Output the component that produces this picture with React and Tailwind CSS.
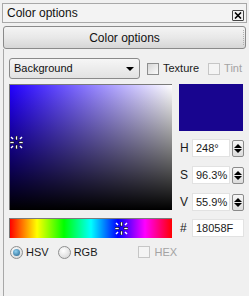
import React from 'react';

function Marker({ className }) {
  // small "busy" style crosshair used on the picker surfaces
  const parts = [
    { x: 5.5, y: 0, w: 2, h: 4 },
    { x: 5.5, y: 9, w: 2, h: 4 },
    { x: 0, y: 5.5, w: 4, h: 2 },
    { x: 9, y: 5.5, w: 4, h: 2 },
  ];
  return (
    <svg width="13" height="13" viewBox="0 0 13 13" className={className}>
      {parts.map((p, i) => (
        <rect key={i} x={p.x} y={p.y} width={p.w} height={p.h} fill="#fff" stroke="#000" strokeWidth="0.6" />
      ))}
      <line x1="1" y1="1" x2="3" y2="3" stroke="#fff" strokeWidth="1.4" />
      <line x1="12" y1="1" x2="10" y2="3" stroke="#fff" strokeWidth="1.4" />
      <line x1="1" y1="12" x2="3" y2="10" stroke="#fff" strokeWidth="1.4" />
      <line x1="12" y1="12" x2="10" y2="10" stroke="#fff" strokeWidth="1.4" />
    </svg>
  );
}

function Spinner() {
  return (
    <div className="w-[12px] h-[17px] rounded-[2px] border border-[#8a8a8a] bg-[linear-gradient(to_bottom,#f6f6f6,#dcdcdc)] flex flex-col items-center justify-center gap-[1px]">
      <div className="w-0 h-0 border-l-[4px] border-r-[4px] border-b-[4px] border-l-transparent border-r-transparent border-b-black" />
      <div className="w-0 h-0 border-l-[4px] border-r-[4px] border-t-[4px] border-l-transparent border-r-transparent border-t-black" />
    </div>
  );
}

function Checkbox({ label, disabled }) {
  return (
    <div className="flex items-center gap-[4px]">
      <div
        className={
          disabled
            ? 'w-[12px] h-[12px] border border-[#c6c6c6] bg-[#f4f4f4]'
            : 'w-[12px] h-[12px] border border-[#8e8f8f] bg-[linear-gradient(135deg,#d6d6d6,#fbfbfb)]'
        }
      />
      <span className={disabled ? 'text-[#a3a3a3]' : 'text-[#1a1a1a]'}>{label}</span>
    </div>
  );
}

function Radio({ label, checked }) {
  return (
    <div className="flex items-center gap-[3px]">
      <div className="w-[13px] h-[13px] rounded-full border border-[#8e8f8f] bg-[radial-gradient(circle_at_40%_35%,#ffffff,#d0d0d0)] flex items-center justify-center">
        {checked && <div className="w-[7px] h-[7px] rounded-full bg-[radial-gradient(circle_at_40%_35%,#8fd0f0,#1f5f8a)]" />}
      </div>
      <span className="text-[#1a1a1a]">{label}</span>
    </div>
  );
}

function Field({ label, value, spin }) {
  return (
    <div className="flex items-center h-[18px]">
      <span className="w-[12px] text-[#1a1a1a] text-[12px] leading-none">{label}</span>
      <div className={`${spin ? 'w-[38px]' : 'w-[52px]'} h-[18px] bg-white border border-[#e2e2e2] flex items-center pl-[3px] text-[#1a1a1a]`}>
        {value}
      </div>
      {spin && (
        <div className="ml-[2px]">
          <Spinner />
        </div>
      )}
    </div>
  );
}

export default function App() {
  return (
    <div className="w-[249px] h-[296px] bg-[#f0f0f0] overflow-hidden flex flex-col text-[11px] font-['Liberation_Sans',Arial,sans-serif]">
      {/* Title bar */}
      <div className="mx-[2px] mt-[3px] h-[20px] border border-[#a8a8a8] bg-[#f3f3f3] flex items-center justify-between pl-[4px] pr-[2px]">
        <span className="text-[#111] text-[12px]">Color options</span>
        <div className="w-[12px] h-[11px] mt-[5px] border border-[#444] rounded-[1px] flex items-center justify-center">
          <svg width="8" height="7" viewBox="0 0 8 7">
            <path d="M1 0.5 L7 6.5 M7 0.5 L1 6.5" stroke="#000" strokeWidth="1.6" />
          </svg>
        </div>
      </div>

      {/* Header button */}
      <div className="mx-[3px] mt-[3px] h-[23px] rounded-[3px] border border-[#8a8a8a] bg-[linear-gradient(to_bottom,#f4f4f4,#e8e8e8_50%,#d6d6d6)] flex items-center justify-center relative">
        <span className="text-[#111] text-[12px]">Color options</span>
        <div className="absolute right-[1px] top-[3px] bottom-[3px] border-r border-dotted border-[#b0b0b0]" />
      </div>

      {/* Panel */}
      <div className="ml-[3px] flex-1 border-l border-[#a8a8a8] pl-[5px] pt-[9px]">
        <div className="flex items-center">
          <div className="w-[131px] h-[21px] rounded-[3px] border border-[#8a8a8a] bg-[linear-gradient(to_bottom,#f6f6f6,#e2e2e2)] flex items-center justify-between pl-[4px] pr-[5px]">
            <span className="text-[#111]">Background</span>
            <div className="w-0 h-0 border-l-[4px] border-r-[4px] border-t-[4px] border-l-transparent border-r-transparent border-t-black" />
          </div>
          <div className="ml-[7px]">
            <Checkbox label="Texture" />
          </div>
          <div className="ml-[9px]">
            <Checkbox label="Tint" disabled />
          </div>
        </div>

        <div className="flex mt-[5px]">
          <div className="flex flex-col">
            <div className="relative w-[163px] h-[126px] border-t border-l border-[#7a7a7a] bg-[linear-gradient(to_right,#2200ff,#ffffff)]">
              <div className="absolute inset-0 bg-[linear-gradient(to_bottom,rgba(0,0,0,0),#000)]" />
              <Marker className="absolute left-[0px] top-[51px]" />
            </div>
            <div className="relative mt-[8px] w-[163px] h-[20px] border-t border-l border-[#7a7a7a] bg-[linear-gradient(to_right,#ff0000,#ffff00,#00ff00,#00ffff,#0000ff,#ff00ff,#ff0000)]">
              <Marker className="absolute left-[105px] top-[3px]" />
            </div>
          </div>

          <div className="ml-[3px] flex flex-col">
            <div className="ml-[4px] w-[64px] h-[47px] bg-[#18058F]" />
            <div className="mt-[8px] flex flex-col gap-[9px] pl-[5px]">
              <Field label="H" value="248°" spin />
              <Field label="S" value="96.3%" spin />
              <Field label="V" value="55.9%" spin />
            </div>
            <div className="mt-[8px] pl-[5px]">
              <Field label="#" value="18058F" />
            </div>
          </div>
        </div>

        <div className="flex items-center mt-[6px] pl-[1px]">
          <Radio label="HSV" checked />
          <div className="ml-[9px]">
            <Radio label="RGB" />
          </div>
          <div className="ml-[41px]">
            <Checkbox label="HEX" disabled />
          </div>
        </div>
      </div>
    </div>
  );
}
